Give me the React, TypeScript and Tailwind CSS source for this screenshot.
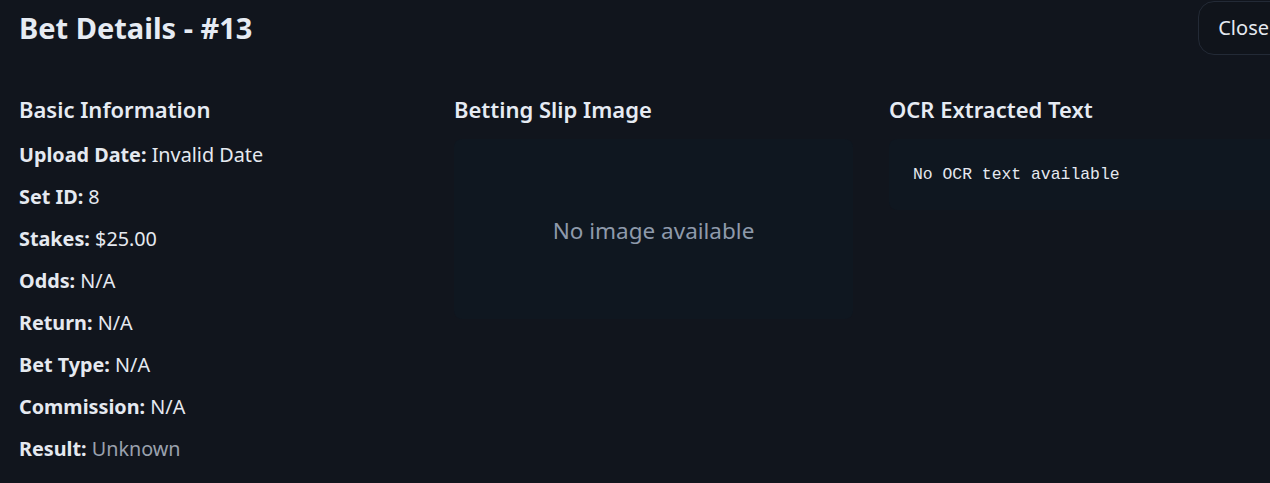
import React from 'react'

const rows: { label: string; value: string; muted?: boolean }[] = [
    { label: 'Upload Date', value: 'Invalid Date' },
    { label: 'Set ID', value: '8' },
    { label: 'Stakes', value: '$25.00' },
    { label: 'Odds', value: 'N/A' },
    { label: 'Return', value: 'N/A' },
    { label: 'Bet Type', value: 'N/A' },
    { label: 'Commission', value: 'N/A' },
    { label: 'Result', value: 'Unknown', muted: true },
    { label: 'Created At', value: 'N/A' },
]

export default function App() {
    return (
        <div className="w-full h-[483px] overflow-hidden bg-[#11151d] font-['Noto_Sans',sans-serif] text-[#e5e9f0]">
            <div className="w-[1308px] pl-[19px] pr-[19px]">
                <div className="flex items-center justify-between h-[55px]">
                    <h1 className="text-[29px] leading-[36px] font-bold text-[#e6ebf3]">Bet Details - #13</h1>
                    <button className="h-[54px] px-[19px] rounded-2xl border border-[#232a36] bg-[#10141b] text-[20px] text-[#e5e9f0]">
                        Close
                    </button>
                </div>

                <div className="grid grid-cols-3 gap-[35px] mt-[38px]">
                    <div>
                        <h2 className="text-[22px] leading-[32px] font-semibold text-[#e6ebf3]">Basic Information</h2>
                        <div className="flex flex-col gap-[12px] mt-[15px]">
                            {rows.map((r) => (
                                <p key={r.label} className="text-[19.8px] leading-[30px]">
                                    <span className="font-bold">{r.label}:</span>{' '}
                                    <span className={r.muted ? 'text-[#9aa1ad]' : ''}>{r.value}</span>
                                </p>
                            ))}
                        </div>
                    </div>

                    <div>
                        <h2 className="text-[22px] leading-[32px] font-semibold text-[#e6ebf3]">Betting Slip Image</h2>
                        <div className="mt-[14px] h-[180px] w-[399px] rounded-lg bg-[#0f1720] flex items-center justify-center">
                            <span className="text-[22.5px] leading-[30px] mt-[3px] text-[#8e9aab]">No image available</span>
                        </div>
                    </div>

                    <div>
                        <h2 className="text-[22px] leading-[32px] font-semibold text-[#e6ebf3]">OCR Extracted Text</h2>
                        <div className="mt-[14px] rounded-lg bg-[#0f1720] px-[24px] py-[24px]">
                            <pre className="text-[16.4px] leading-[23px] text-[#e5e9f0]" style={{ fontFamily: '"Liberation Mono", "DejaVu Sans Mono", monospace' }}>
                                No OCR text available
                            </pre>
                        </div>
                    </div>
                </div>
            </div>
        </div>
    )
}
